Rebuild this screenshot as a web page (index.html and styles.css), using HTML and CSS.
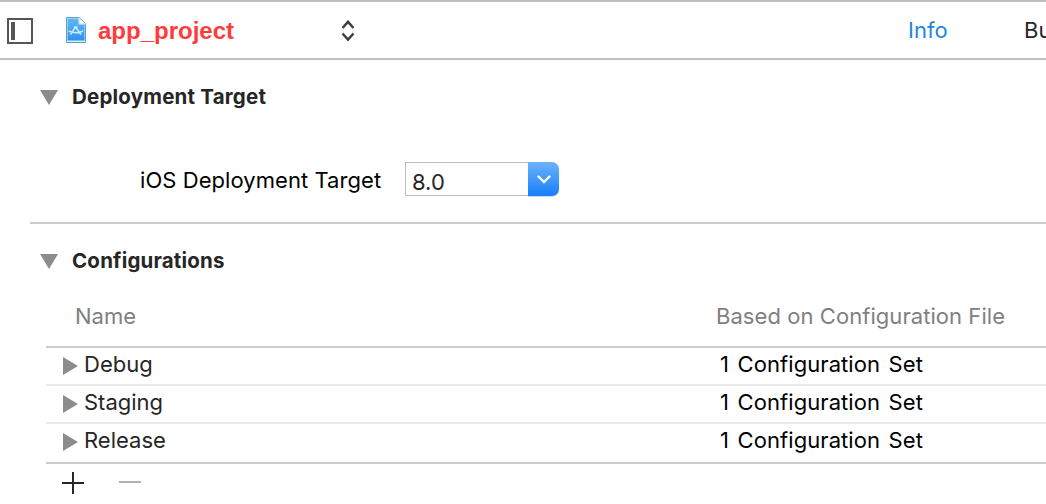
FILE: index.html
```html
<!DOCTYPE html>
<html lang="en">
<head>
<meta charset="utf-8">
<title>app_project</title>
<link rel="stylesheet" href="styles.css">
</head>
<body>
<header class="toolbar">
  <svg class="sidebar-icon" width="26" height="26" viewBox="0 0 26 26"><rect x="1" y="1" width="24" height="24" fill="none" stroke="#555" stroke-width="2"/><rect x="4" y="4" width="4" height="18" fill="#555"/></svg>
  <svg class="project-icon" width="22" height="28" viewBox="0 0 22 28">
    <defs><linearGradient id="doc" x1="0" y1="0" x2="0" y2="1"><stop offset="0" stop-color="#5fb9f1"/><stop offset="1" stop-color="#2d93ee"/></linearGradient></defs>
    <path d="M1.500 1.500H14.500L20.500 7.500V26.500H1.500Z" fill="#d9ebf6" stroke="#5a9fd0"/>
    <path d="M2.500 2.500H13.500V8.500H19.500V24.500H2.500Z" fill="url(#doc)"/>
    <path d="M14 1.500V8H20.500Z" fill="#f4f8fa" stroke="#b9cfdd" stroke-width=".6"/>
    <path d="M10.500 11L5.500 18.500M10.500 11L16 18.500M3.500 15Q11 18.500 18 15M9 11H12.500" fill="none" stroke="#c8e8fc" stroke-width="1.500"/>
  </svg>
  <span class="project-name">app_project</span>
  <svg class="stepper" width="14" height="22" viewBox="0 0 14 22"><path d="M1.500 8L7 1.800L12.500 8M1.500 13.500L7 19.700L12.500 13.500" fill="none" stroke="#404040" stroke-width="2.500"/></svg>
  <nav class="tabs"><span class="tab active">Info</span><span class="tab">Bu</span></nav>
</header>
<main>
  <section class="deployment">
    <h2 class="heading"><svg class="arrow-down" width="18" height="15" viewBox="0 0 18 15"><path d="M0 0H18L9 15Z" fill="#8c8c8c"/></svg><span>Deployment Target</span></h2>
    <div class="field">
      <label class="field-label">iOS Deployment Target</label>
      <div class="combo">
        <span class="combo-value">8.0</span>
        <span class="combo-button"><svg width="14" height="9" viewBox="0 0 14 9"><path d="M1.500 1.500L7 7L12.500 1.500" fill="none" stroke="#fff" stroke-width="2.400" stroke-linecap="round"/></svg></span>
      </div>
    </div>
  </section>
  <section class="configurations">
    <h2 class="heading"><svg class="arrow-down" width="18" height="15" viewBox="0 0 18 15"><path d="M0 0H18L9 15Z" fill="#8c8c8c"/></svg><span>Configurations</span></h2>
    <div class="table">
      <div class="table-head"><span class="col-name">Name</span><span class="col-file">Based on Configuration File</span></div>
      <div class="row"><svg class="arrow-right" width="15" height="18" viewBox="0 0 15 18"><path d="M0 0V18L15 9Z" fill="#8c8c8c"/></svg><span class="name">Debug</span><span class="set">1 Configuration Set</span></div>
      <div class="row"><svg class="arrow-right" width="15" height="18" viewBox="0 0 15 18"><path d="M0 0V18L15 9Z" fill="#8c8c8c"/></svg><span class="name">Staging</span><span class="set">1 Configuration Set</span></div>
      <div class="row last"><svg class="arrow-right" width="15" height="18" viewBox="0 0 15 18"><path d="M0 0V18L15 9Z" fill="#8c8c8c"/></svg><span class="name">Release</span><span class="set">1 Configuration Set</span></div>
    </div>
    <div class="actions">
      <svg width="22" height="22" viewBox="0 0 22 22"><path d="M0 11H22M11 0V22" stroke="#262626" stroke-width="2"/></svg>
      <svg width="22" height="22" viewBox="0 0 22 22"><path d="M0 10H22" stroke="#b0b0b0" stroke-width="2"/></svg>
    </div>
  </section>
</main>
</body>
</html>
```

FILE: styles.css
```css
* { box-sizing: border-box; }
body { margin: 0; height: 504px; overflow: hidden; background: #fff; color: #262626; font: 22px/32px Inter, "Liberation Sans", sans-serif; white-space: nowrap; }
svg { display: block; flex: none; }
.toolbar { display: flex; align-items: center; height: 60px; border-top: 2px solid #bfbfbf; border-bottom: 2px solid #bfbfbf; padding-left: 7px; overflow: hidden; }
.sidebar-icon { margin-top: 2px; }
.project-icon { margin-left: 32px; }
.project-name { flex: none; width: 243px; margin-left: 11px; padding-top: 1px; color: #ff3b3b; font: bold 24px/32px "Liberation Sans", Arial, sans-serif; }
.stepper { margin-top: 2px; }
.tabs { display: flex; flex: none; margin-left: 553px; }
.tab { flex: none; }
.tab.active { width: 116px; color: #1f87dd; }
.heading { display: flex; align-items: center; height: 32px; margin: 0; padding-left: 10px; font-size: 20.500px; font-weight: 700; letter-spacing: 0.200px; }
.arrow-down { margin-right: 14px; }
.deployment { height: 164px; margin-left: 30px; padding-top: 21px; border-bottom: 2px solid #ccc; }
.field { display: flex; align-items: center; height: 34px; margin-top: 49px; color: #000; }
.field-label { width: 265px; margin-left: 110px; padding-top: 2px; letter-spacing: 0.060px; }
.combo { display: flex; width: 154px; height: 34px; }
.combo-value { flex: 1; padding: 2px 0 0 6px; border: 1px solid #bdbdbd; border-right: 0; color: #262626; line-height: 34px; }
.combo-button { display: flex; align-items: center; justify-content: center; width: 31px; border-radius: 0 7px 7px 0; background: linear-gradient(#6db3fa, #167efb); box-shadow: 0 1px 1px #ccd8e6; }
.configurations { margin-left: 30px; padding-top: 21px; }
.table { margin-left: 16px; }
.table-head { display: flex; height: 71px; padding: 23px 0 0 29px; border-bottom: 2px solid #ccc; color: #808080; }
.col-name { width: 641px; }
.col-file { letter-spacing: 0.060px; }
.row { display: flex; height: 38px; padding-left: 17px; border-bottom: 2px solid #ebebeb; }
.row.last { height: 40px; border-bottom-color: #ccc; }
.arrow-right { margin-top: 9px; }
.name { width: 636px; margin-left: 6px; }
.set { color: #000; letter-spacing: 0.080px; word-spacing: 2.200px; }
.actions { display: flex; gap: 35px; padding: 8px 0 0 32px; }
```
